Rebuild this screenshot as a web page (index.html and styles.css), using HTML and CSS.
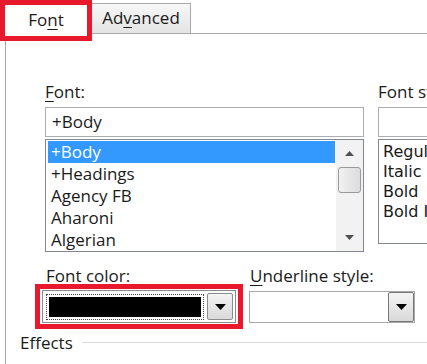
FILE: index.html
```html
<!DOCTYPE html>
<html>
<head>
<meta charset="utf-8">
<link rel="stylesheet" href="styles.css">
</head>
<body>
<div class="tabs">
  <div class="tab tab-font">Fo<u>n</u>t</div>
  <div class="tab tab-adv">Ad<u>v</u>anced</div>
  <div class="tab-rest"></div>
</div>
<div class="panel">
  <div class="font-row">
    <div class="col col-font">
      <div class="label"><u>F</u>ont:</div>
      <div class="input">+Body</div>
      <div class="list">
        <div class="rows">
          <div class="row sel">+Body</div>
          <div class="row">+Headings</div>
          <div class="row">Agency FB</div>
          <div class="row">Aharoni</div>
          <div class="row">Algerian</div>
        </div>
        <div class="scrollbar">
          <div class="sb-btn"><svg width="9" height="5" viewBox="0 0 9 5"><path d="M0 5 L4.5 0 L9 5 Z" fill="#505050"/></svg></div>
          <div class="thumb"></div>
          <div class="sb-track"></div>
          <div class="sb-btn"><svg width="9" height="5" viewBox="0 0 9 5"><path d="M0 0 L9 0 L4.5 5 Z" fill="#505050"/></svg></div>
        </div>
      </div>
    </div>
    <div class="col col-style">
      <div class="label">Font style:</div>
      <div class="input"></div>
      <div class="list list-style">
        <div class="srow">Regular</div>
        <div class="srow">Italic</div>
        <div class="srow">Bold</div>
        <div class="srow">Bold Italic</div>
      </div>
    </div>
  </div>
  <div class="color-row">
    <div class="ccol">
      <div class="label clabel">Font color:</div>
      <div class="redbox">
        <div class="combo">
          <div class="swatch-focus"><div class="swatch"></div></div>
          <div class="dd"><svg width="11" height="6" viewBox="0 0 11 6"><path d="M0 0 L11 0 L5.5 6 Z" fill="#000"/></svg></div>
        </div>
      </div>
    </div>
    <div class="ucol">
      <div class="label"><u>U</u>nderline style:</div>
      <div class="combo ucombo">
        <div class="ufield"></div>
        <div class="dd udd"><svg width="11" height="6" viewBox="0 0 11 6"><path d="M0 0 L11 0 L5.5 6 Z" fill="#000"/></svg></div>
      </div>
    </div>
  </div>
  <div class="effects">
    <span class="eff-label">Effects</span>
    <span class="eff-line"></span>
  </div>
</div>
</body>
</html>
```
FILE: styles.css
```css
html, body {
  margin: 0;
  padding: 0;
  background: #fff;
}
body {
  width: 427px;
  height: 364px;
  overflow: hidden;
  font-family: "Open Sans", "Noto Sans", sans-serif;
  font-size: 17px;
  color: #1a1a1a;
}
u {
  text-decoration-thickness: 1px;
  text-underline-offset: 3px;
}
.tabs {
  display: flex;
  align-items: flex-start;
  height: 34px;
}
.tab-font {
  position: relative;
  z-index: 2;
  box-sizing: border-box;
  width: 92px;
  height: 41px;
  border: 5px solid #e8192c;
  background: #fff;
  display: flex;
  align-items: center;
  justify-content: center;
  padding-bottom: 2px;
}
.tab-adv {
  box-sizing: border-box;
  margin-top: 3px;
  width: 99px;
  height: 31px;
  border: 1px solid #a9a9a9;
  border-left: none;
  background: linear-gradient(#f7f7f7, #e4e4e4);
  display: flex;
  align-items: center;
  justify-content: center;
  padding-bottom: 2px;
}
.tab-rest {
  flex: 1;
  box-sizing: border-box;
  height: 34px;
  border-bottom: 1px solid #a9a9a9;
}
.panel {
  margin-left: 5px;
  border-left: 1px solid #a9a9a9;
  height: 330px;
  box-sizing: border-box;
  padding-top: 46px;
}
.label {
  line-height: 23px;
  height: 23px;
  white-space: nowrap;
}
.font-row {
  display: flex;
  gap: 14px;
  padding-left: 39px;
}
.col-font {
  width: 319px;
  flex: none;
}
.col-style {
  width: 120px;
  flex: none;
}
.input {
  box-sizing: border-box;
  margin-top: 4px;
  height: 30px;
  border: 1px solid #abadb3;
  padding-left: 6px;
  line-height: 27px;
}
.list {
  box-sizing: border-box;
  margin-top: 2px;
  height: 113px;
  border: 1px solid #828790;
  display: flex;
}
.rows {
  flex: 1;
  padding: 1px 1px 0 2px;
  overflow: hidden;
}
.row {
  height: 22px;
  line-height: 21px;
  padding-left: 3px;
  white-space: nowrap;
}
.row.sel {
  background: #3399ff;
  color: #fff;
}
.scrollbar {
  width: 27px;
  background: #f2f2f2;
  display: flex;
  flex-direction: column;
  align-items: center;
}
.sb-btn {
  height: 27px;
  width: 100%;
  display: flex;
  align-items: center;
  justify-content: center;
}
.thumb {
  box-sizing: border-box;
  width: 23px;
  height: 26px;
  border: 1px solid #9a9a9a;
  border-radius: 3px;
  background: linear-gradient(90deg, #f2f2f2, #dcdcdc);
}
.sb-track {
  flex: 1;
}
.list-style {
  height: 105px;
  display: block;
  padding: 2px 0 0 4px;
  font-family: "DejaVu Sans", sans-serif;
  font-size: 16px;
}
.srow {
  height: 20px;
  line-height: 20px;
  white-space: nowrap;
}
.color-row {
  display: flex;
  gap: 6px;
  padding-left: 29px;
  margin-top: 15px;
}
.color-row .label {
  height: 17px;
  line-height: 17px;
}
.ccol {
  width: 208px;
  flex: none;
}
.clabel {
  padding-left: 11px;
}
.redbox {
  box-sizing: border-box;
  height: 45px;
  border: 5px solid #e8192c;
  padding: 1px 2px;
}
.combo {
  box-sizing: border-box;
  height: 33px;
  border: 1px solid #8a8a8a;
  background: #fff;
  display: flex;
  align-items: center;
  padding: 1px 2px 1px 3px;
  gap: 3px;
}
.swatch-focus {
  flex: 1;
  height: 26px;
  box-sizing: border-box;
  border: 1px dotted #444;
  padding: 2px;
}
.swatch {
  height: 100%;
  background: #000;
}
.dd {
  box-sizing: border-box;
  width: 26px;
  height: 27px;
  border: 1px solid #8c8c8c;
  border-radius: 2px;
  background: linear-gradient(#f4f4f4, #d9d9d9);
  display: flex;
  align-items: center;
  justify-content: center;
}
.ucol {
  width: 166px;
  flex: none;
}
.ucol .label {
  padding-left: 1px;
}
.ucombo {
  margin-top: 7px;
  height: 32px;
  padding: 0;
  border-color: #a9a9a9;
  gap: 0;
}
.ufield {
  flex: 1;
}
.udd {
  height: 30px;
  width: 26px;
  border-color: #777;
}
.effects {
  display: flex;
  align-items: center;
  gap: 9px;
  padding-left: 14px;
  margin-top: 5px;
  height: 17px;
  line-height: 17px;
}
.eff-line {
  flex: 1;
  height: 1px;
  background: #dcdcdc;
}
```
